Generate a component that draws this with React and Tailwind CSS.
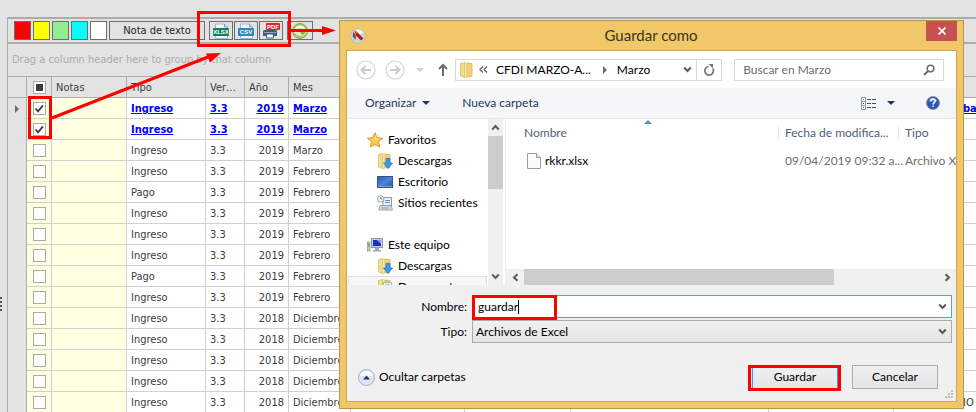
import React from 'react';
import clsx from 'clsx';

const columns = ['Notas', 'Tipo', 'Ver…', 'Año', 'Mes', '', '', '', '', ''];

const row = (tipo, anio, mes, extra = {}) => ({ tipo, version: '3.3', anio, mes, ...extra });

const rows = [
    row('Ingreso', 2019, 'Marzo', { checked: true, last: 'ba' }),
    row('Ingreso', 2019, 'Marzo', { checked: true }),
    row('Ingreso', 2019, 'Marzo'),
    row('Ingreso', 2019, 'Febrero'),
    row('Pago', 2019, 'Febrero'),
    row('Ingreso', 2019, 'Febrero'),
    row('Ingreso', 2019, 'Febrero'),
    row('Ingreso', 2019, 'Febrero'),
    row('Pago', 2019, 'Febrero'),
    row('Ingreso', 2019, 'Febrero'),
    row('Ingreso', 2018, 'Diciembre'),
    row('Ingreso', 2018, 'Diciembre'),
    row('Ingreso', 2018, 'Diciembre'),
    row('Ingreso', 2018, 'Diciembre'),
    row('Ingreso', 2018, 'Diciembre', { last: 'IO' }),
];

const swatches = [
    { name: 'Rojo', color: 'bg-[#ff0000]' },
    { name: 'Amarillo', color: 'bg-[#ffff00]' },
    { name: 'Verde', color: 'bg-[#90ee90]' },
    { name: 'Cian', color: 'bg-[#00ffff]' },
    { name: 'Blanco', color: 'bg-white' },
];

/* ---------- Icons ---------- */

function SheetIcon({ label, color }) {
    return (
        <svg width="18" height="16" viewBox="0 0 18 16">
            <path d="M3.500 1h9l3 3v11.500h-12z" fill="#f4f8fc" stroke="#9fb6d0" />
            <path d="M12.500 1v3h3" fill="#d5e1ee" stroke="#7f9cbd" />
            <rect x="1" y="5" width="16" height="8" rx="1" fill={color} />
            <text x="9" y="11" textAnchor="middle" fontSize="6" fontWeight="700" fontFamily="Liberation Sans, sans-serif" fill="#fff">
                {label}
            </text>
        </svg>
    );
}

function PdfPrintIcon() {
    return (
        <svg width="18" height="16" viewBox="0 0 18 16">
            <path d="M4.500 3.500h7V9h-7z" fill="#fff" stroke="#8ea3c2" />
            <path d="M2.500 7h11A1.500 1.500 0 0 1 15 8.500V13H1V8.500A1.500 1.500 0 0 1 2.500 7z" fill="#44597f" />
            <path d="M2 9.500h12" stroke="#8fa3c4" />
            <path d="M4.500 11h7v4h-7z" fill="#fff" stroke="#44597f" />
            <rect x="4" y="0" width="14" height="7" rx="1" fill="#d22c2c" />
            <text x="11" y="6" textAnchor="middle" fontSize="6" fontWeight="700" fontFamily="Liberation Sans, sans-serif" fill="#fff">
                PDF
            </text>
        </svg>
    );
}

function RefreshIcon() {
    return (
        <svg width="16" height="16" viewBox="0 0 16 16" fill="none">
            <circle cx="8" cy="8" r="7.500" fill="#a5c95a" stroke="#86ad3c" />
            <circle cx="8" cy="8" r="5" fill="#e3e3e3" />
            <path d="M3.500 10.500a5 5 0 1 1 9-4.500" stroke="#f4f9e8" strokeWidth="1.500" />
            <path d="M6.500 8h8.500l-4.200 5.500z" fill="#8cb63c" stroke="#f4f9e8" strokeWidth=".8" />
        </svg>
    );
}

function AppIcon() {
    return (
        <svg width="16" height="16" viewBox="0 0 16 16">
            <circle cx="8" cy="8" r="7.500" fill="#d3d3d0" stroke="#b7ab93" strokeWidth=".5" />
            <path d="M5 2c3-1.200 6.500-.5 8.500 2.500L9 7z" fill="#f5f5f5" />
            <path d="M4.500 2.500L7 4l6.500 6.500L11 12.500 6 7.500z" fill="#b01c1c" />
            <path d="M3.500 3.500L2.500 8l3 4L6 8z" fill="#5a5a5a" />
            <path d="M4.500 2.500L7 4.500 5.500 7z" fill="#e65a4a" />
        </svg>
    );
}

function NavArrow({ flip }) {
    return (
        <svg width="20" height="20" viewBox="0 0 20 20" fill="none" className={clsx(flip && 'rotate-180')}>
            <circle cx="10" cy="10" r="9" stroke="#d4d4d4" strokeWidth="1.200" />
            <path d="M15 10H6M9.500 6L5.500 10l4 4" stroke="#cbcbcb" strokeWidth="2" />
        </svg>
    );
}

function Chevron({ dir = 'down', className }) {
    const turn = { down: 'rotate-0', up: 'rotate-180', left: 'rotate-90', right: '-rotate-90' }[dir];
    return (
        <svg width="9" height="9" viewBox="0 0 9 9" fill="none" className={clsx(turn, className)}>
            <path d="M1.200 2.500L4.500 6l3.300-3.500" stroke="#5a5a5a" strokeWidth="2" />
        </svg>
    );
}

function Caret({ color = '#1e395b' }) {
    return (
        <svg width="8" height="4" viewBox="0 0 8 4">
            <path d="M0 0h8L4 4z" fill={color} />
        </svg>
    );
}

function FolderIcon({ children }) {
    return (
        <svg width="16" height="16" viewBox="0 0 16 16">
            <path d="M1.500 1.500l4-1v15l-4-1.500z" fill="#f3dc8c" stroke="#d9b95a" strokeWidth=".7" />
            <path d="M5.500 1h5v13.500l-5 1z" fill="#f9eab0" stroke="#dcc069" strokeWidth=".7" />
            <path d="M8 1.500h5v13H8z" fill="#efd37b" stroke="#d4b350" strokeWidth=".7" />
            {children}
        </svg>
    );
}

function DownloadsIcon() {
    return (
        <FolderIcon>
            <path d="M9 5.500h4V10h2.500L11 15.500 6.500 10H9z" fill="#3b9be6" stroke="#1f6fb8" strokeWidth=".7" />
        </FolderIcon>
    );
}

function DocumentsIcon() {
    return (
        <FolderIcon>
            <path d="M6.500 3.500h8v11h-8z" fill="#f4f8fc" stroke="#8ba3bd" strokeWidth=".8" />
            <path d="M8 6h5M8 8h5M8 10h5" stroke="#5d8fc4" />
        </FolderIcon>
    );
}

function StarIcon() {
    return (
        <svg width="16" height="16" viewBox="0 0 16 16">
            <path
                d="M8 .8l2.200 4.900 5.300.6-3.900 3.500 1.100 5.300L8 12.400l-4.700 2.700 1.100-5.300L.5 6.300l5.300-.6z"
                fill="#ffc94a"
                stroke="#e58a1f"
                strokeWidth=".9"
            />
            <path d="M8 3l1.300 3.500 3 .3L8 8z" fill="#ffe9a8" />
        </svg>
    );
}

function DesktopIcon() {
    return (
        <svg width="16" height="16" viewBox="0 0 16 16">
            <defs>
                <linearGradient id="desk" x1="0" y1="0" x2="1" y2="1">
                    <stop offset="0" stopColor="#2a5bb4" />
                    <stop offset=".5" stopColor="#4c86d6" />
                    <stop offset="1" stopColor="#2457ad" />
                </linearGradient>
            </defs>
            <rect x=".5" y="2.500" width="15" height="11" fill="url(#desk)" stroke="#3a5288" />
            <path d="M1 12.500h14" stroke="#7f9fd0" />
        </svg>
    );
}

function RecentIcon() {
    return (
        <svg width="16" height="16" viewBox="0 0 16 16">
            <path d="M6 2.500h8.500V11H6z" fill="#eef2f5" stroke="#8c979f" />
            <path d="M8 5.500h5M8 7.500h5" stroke="#5b94c4" />
            <path d="M3 10.500h11l1.500 4.500H2z" fill="#d0d6da" stroke="#8c979f" strokeWidth=".8" />
            <path d="M5 13h7" stroke="#8fa5b5" />
            <circle cx="3.700" cy="3.900" r="3.200" fill="#f7f9fa" stroke="#8c979f" strokeWidth=".9" />
            <path d="M3.700 2v2h1.600" fill="none" stroke="#55606a" strokeWidth=".8" />
        </svg>
    );
}

function ComputerIcon() {
    return (
        <svg width="16" height="16" viewBox="0 0 16 16">
            <rect x=".5" y="5" width="2.500" height="9" fill="#c4cace" stroke="#7e868c" strokeWidth=".6" />
            <path d="M1 6.500h1.500v3H1z" fill="#3fc23f" />
            <rect x="4.500" y="1.500" width="11" height="9" fill="#c9ced3" stroke="#9098a0" />
            <rect x="6" y="3" width="8" height="6" fill="#1b2fc4" />
            <path d="M9.500 3H14v4z" fill="#7f9af0" />
            <path d="M8 11h4v2H8zM6 13h8v1.500H6z" fill="#a4abb1" />
        </svg>
    );
}

function FileIcon() {
    return (
        <svg width="14" height="16" viewBox="0 0 14 16">
            <path d="M.5 .5h9l4 4v11H.5z" fill="#fafafa" stroke="#9c9c9c" />
            <path d="M9.500 .5v4h4" fill="#e6e6e6" stroke="#9c9c9c" />
        </svg>
    );
}

function ViewIcon() {
    return (
        <svg width="16" height="13" viewBox="0 0 16 13" shapeRendering="crispEdges">
            <path d="M.5 .5h4v12h-4zM.5 4.500h4M.5 8.500h4" fill="#fff" stroke="#8a9bb0" />
            <path d="M2 2h1v1H2z" fill="#3d8a3d" />
            <path d="M2 6h1v1H2z" fill="#c23030" />
            <path d="M2 10h1v1H2z" fill="#2f62b8" />
            <path d="M6 2.500h4m1 0h4M6 6.500h4m1 0h4M6 10.500h4m1 0h4" stroke="#3f4f6b" />
        </svg>
    );
}

function HelpIcon() {
    return (
        <svg width="14" height="14" viewBox="0 0 14 14">
            <circle cx="7" cy="7" r="6.500" fill="#2c55b8" stroke="#8d96a8" />
            <path d="M2.500 5.500a4.700 4.700 0 0 1 9 0z" fill="#6f95de" />
            <path d="M4.800 5.300c0-3 4.500-2.800 4.500-.3 0 1.600-2.200 1.600-2.200 3.400M7.100 9.600v1.500" fill="none" stroke="#fff" strokeWidth="1.500" />
        </svg>
    );
}

/* ---------- Grid ---------- */

function GridCheckbox({ checked, mixed, label }) {
    return (
        <span className="grid size-[13px] place-items-center">
            <input
                type="checkbox"
                aria-label={label}
                defaultChecked={checked}
                className="col-start-1 row-start-1 size-[13px] appearance-none border border-[#a9a9a9] bg-white"
            />
            {mixed && <span className="pointer-events-none col-start-1 row-start-1 size-[7px] bg-[#3c3c3c]" />}
            {checked && (
                <svg width="11" height="11" viewBox="0 0 11 11" fill="none" className="pointer-events-none col-start-1 row-start-1">
                    <path d="M1.500 5.500L4 8.300l5-6" stroke="#3c3c3c" strokeWidth="1.800" />
                </svg>
            )}
        </span>
    );
}

function GridRow({ item, index }) {
    const cell = 'h-[21px] overflow-hidden border-r border-b border-[#d0d0d0] bg-white px-1 pt-0.5 whitespace-nowrap';
    const value = (text) =>
        item.checked ? (
            <a href="#cfdi" className="font-bold text-[#0000ff] underline">
                {text}
            </a>
        ) : (
            text
        );

    return (
        <tr>
            <td className="h-[21px] border-r border-[#acacac] bg-[#e3e3e3]">
                {index === 0 && (
                    <svg width="5" height="8" viewBox="0 0 5 8" className="mx-auto">
                        <path d="M0 0l4 4-4 4z" fill="#6e6e6e" />
                    </svg>
                )}
            </td>
            <td className="h-[21px] border-r border-b border-[#d0d0d0] bg-[#ffffe1] pl-1.5">
                <GridCheckbox checked={item.checked} label={`Seleccionar fila ${index + 1}`} />
            </td>
            <td className="h-[21px] border-r border-b border-[#d0d0d0] bg-[#ffffe1]" />
            <td className={cell}>{value(item.tipo)}</td>
            <td className={cell}>{value(item.version)}</td>
            <td className={clsx(cell, 'text-right')}>{value(item.anio)}</td>
            <td className={cell}>{value(item.mes)}</td>
            <td className={cell} />
            <td className={cell} />
            <td className={cell} />
            <td className={cell} />
            <td className="h-[21px] border-b border-[#d0d0d0] bg-white pt-0.5 pl-[69px] whitespace-nowrap">
                {item.last && value(item.last)}
            </td>
        </tr>
    );
}

function InvoiceGrid() {
    return (
        <table className="w-full table-fixed border-separate border-spacing-0 text-left text-[#3c3c3c]">
            <colgroup>
                <col className="w-[19px]" />
                <col className="w-[25px]" />
                <col className="w-[75px]" />
                <col className="w-[79px]" />
                <col className="w-[39px]" />
                <col className="w-[44px]" />
                <col className="w-[62px]" />
                <col className="w-[114px]" />
                <col className="w-[106px]" />
                <col className="w-[198px]" />
                <col className="w-[125px]" />
                <col />
            </colgroup>
            <thead>
                <tr>
                    <th className="h-[22px] border-y border-r border-[#acacac]" />
                    <th className="border-y border-r border-[#acacac] pl-1.5">
                        <GridCheckbox mixed label="Seleccionar todo" />
                    </th>
                    {columns.map((name, i) => (
                        <th
                            key={i}
                            className={clsx(
                                'border-y border-[#acacac] px-1 pt-0.5 font-normal whitespace-nowrap',
                                i < columns.length - 1 && 'border-r',
                            )}
                        >
                            {name}
                        </th>
                    ))}
                </tr>
            </thead>
            <tbody>
                {rows.map((item, i) => (
                    <GridRow key={i} item={item} index={i} />
                ))}
            </tbody>
        </table>
    );
}

function GridToolbar() {
    const button = 'flex h-[19px] items-center justify-center border border-[#6e6e6e]';
    return (
        <div className="flex h-[25px] items-center border-b-2 border-[#acacac] pl-1.5">
            <div className="flex gap-0.5">
                {swatches.map((s) => (
                    <button key={s.name} aria-label={s.name} className={clsx('h-[19px] w-[17px] border border-[#6e6e6e]', s.color)} />
                ))}
                <button className={clsx(button, 'w-24 text-[#1e1e1e]')}>Nota de texto</button>
            </div>
            <div className="ml-1 flex gap-px">
                <button aria-label="Exportar a XLSX" className={clsx(button, 'w-6')}>
                    <SheetIcon label="XLSX" color="#12805c" />
                </button>
                <button aria-label="Exportar a CSV" className={clsx(button, 'w-6')}>
                    <SheetIcon label="CSV" color="#2f87bd" />
                </button>
                <button aria-label="Exportar a PDF" className={clsx(button, 'w-6')}>
                    <PdfPrintIcon />
                </button>
            </div>
            <button aria-label="Actualizar" className={clsx(button, 'ml-1 w-[26px]')}>
                <RefreshIcon />
            </button>
        </div>
    );
}

/* ---------- Dialog ---------- */

function TreeItem({ icon, label, root }) {
    return (
        <li className={clsx('flex h-[21px] items-center gap-[5px]', root ? 'pl-5' : 'pl-[30px]')}>
            {icon}
            {label}
        </li>
    );
}

function DialogNav() {
    return (
        <div className="flex h-[37px] items-center pr-3 pl-[9px]">
            <button aria-label="Atrás">
                <NavArrow />
            </button>
            <button aria-label="Adelante" className="ml-[9px]">
                <NavArrow flip />
            </button>
            <button aria-label="Recientes" className="ml-2.5 px-px">
                <Caret color="#cfcfcf" />
            </button>
            <button aria-label="Subir" className="ml-3">
                <svg width="12" height="13" viewBox="0 0 12 13" fill="none">
                    <path d="M6 13V2M2 6l4-4 4 4" stroke="#6b6b6b" strokeWidth="2" />
                </svg>
            </button>
            <div className="ml-1.5 flex h-[22px] flex-[276] items-center border border-[#d9d9d9] pl-[3px] whitespace-nowrap">
                <FolderIcon />
                <svg width="9" height="7" viewBox="0 0 9 7" fill="none" className="ml-1">
                    <path d="M4 .5l-3 3 3 3M8 .5l-3 3 3 3" stroke="#555" strokeWidth="1.200" />
                </svg>
                <span className="ml-2">CFDI MARZO-A...</span>
                <svg width="4" height="8" viewBox="0 0 4 8" className="ml-3">
                    <path d="M0 0l4 4-4 4z" fill="#6b6b6b" />
                </svg>
                <span className="ml-2.5">Marzo</span>
                <button aria-label="Ubicaciones anteriores" className="mr-1 ml-auto">
                    <Chevron />
                </button>
                <button aria-label="Actualizar carpeta" className="flex h-full w-[25px] items-center justify-center border-l border-[#d9d9d9]">
                    <svg width="12" height="12" viewBox="0 0 12 12" fill="none">
                        <path d="M9.800 4.500A4.300 4.300 0 1 1 5.500 2.500" stroke="#777" strokeWidth="1.700" />
                        <path d="M5.500 0h4.500v4.500z" fill="#777" />
                    </svg>
                </button>
            </div>
            <div className="ml-3 flex h-[22px] flex-[202] items-center border border-[#d9d9d9] pr-2 pl-2">
                <input
                    type="text"
                    aria-label="Buscar en Marzo"
                    placeholder="Buscar en Marzo"
                    className="w-full min-w-0 outline-none placeholder:text-[#6d6d6d]"
                />
                <svg width="12" height="12" viewBox="0 0 12 12" fill="none" className="shrink-0">
                    <circle cx="7.500" cy="4.500" r="3.300" stroke="#6b6b6b" strokeWidth="1.600" />
                    <path d="M5 7L1 11" stroke="#6b6b6b" strokeWidth="2" />
                </svg>
            </div>
        </div>
    );
}

function FileList() {
    return (
        <div className="flex min-w-0 flex-1 flex-col">
            <div className="flex h-[7px] items-start pt-px pl-[138px]">
                <svg width="8" height="4" viewBox="0 0 8 4">
                    <path d="M0 4h8L4 0z" fill="#4c93bd" />
                </svg>
            </div>
            <table className="w-full table-fixed border-separate border-spacing-0 text-left">
                <colgroup>
                    <col />
                    <col className="w-[120px]" />
                    <col className="w-[57px]" />
                </colgroup>
                <thead className="text-[#4c607a]">
                    <tr className="h-[14px] leading-[14px]">
                        <th className="border-r border-[#dfe9f5] pl-[18px] font-normal">Nombre</th>
                        <th className="border-r border-[#dfe9f5] pl-1.5 font-normal whitespace-nowrap">Fecha de modifica...</th>
                        <th className="pl-1.5 font-normal">Tipo</th>
                    </tr>
                </thead>
                <tbody className="text-[#6d6d6d]">
                    <tr>
                        <td className="h-[42px] pl-[21px] text-black">
                            <span className="flex items-center gap-1">
                                <FileIcon />
                                rkkr.xlsx
                            </span>
                        </td>
                        <td className="pl-1.5 whitespace-nowrap">09/04/2019 09:32 a...</td>
                        <td className="overflow-hidden pl-1.5 whitespace-nowrap">Archivo X</td>
                    </tr>
                </tbody>
            </table>
            <div className="mt-auto flex h-4 items-center bg-[#f0f0f0] pr-1 pl-[5px]">
                <Chevron dir="left" />
                <div className="ml-1 h-full w-[310px] bg-[#cdcdcd]" />
                <Chevron dir="right" className="ml-auto" />
            </div>
        </div>
    );
}

function SaveDialog() {
    return (
        <section
            role="dialog"
            aria-labelledby="dialog-title"
            className="absolute top-5 right-3 left-[339px] border border-[#b8954a] bg-[#f0c869] px-1.5 pb-1.5 font-[Lato,'Open_Sans',sans-serif] text-xs text-black"
        >
            <header className="flex h-[29px] items-start">
                <span className="self-center pl-1">
                    <AppIcon />
                </span>
                <h1 id="dialog-title" className="flex-1 self-center pl-2.5 text-center text-[15px] text-[#3a3420]">
                    Guardar como
                </h1>
                <button aria-label="Cerrar" className="flex h-5 w-[31px] items-center justify-center bg-[#c75050]">
                    <svg width="8" height="8" viewBox="0 0 8 8" fill="none">
                        <path d="M.5 .5l7 7M7.500 .5l-7 7" stroke="#fff" strokeWidth="1.700" />
                    </svg>
                </button>
            </header>

            <div className="border border-[#cfa54f] bg-white">
                <DialogNav />
                <div className="flex h-[31px] items-center border-b border-[#e5e8ec] bg-[#f4f6f8] pr-4 pl-[18px] text-[#1e395b]">
                    <button className="flex items-center gap-1.5">
                        Organizar
                        <Caret />
                    </button>
                    <button className="ml-8">Nueva carpeta</button>
                    <button aria-label="Vista" className="ml-auto flex items-center gap-2.5">
                        <ViewIcon />
                        <Caret />
                    </button>
                    <button aria-label="Ayuda" className="ml-[31px]">
                        <HelpIcon />
                    </button>
                </div>

                <div className="flex h-[166px] overflow-hidden">
                    <ul className="w-[141px] pt-2.5">
                        <TreeItem root icon={<StarIcon />} label="Favoritos" />
                        <TreeItem icon={<DownloadsIcon />} label="Descargas" />
                        <TreeItem icon={<DesktopIcon />} label="Escritorio" />
                        <TreeItem icon={<RecentIcon />} label="Sitios recientes" />
                        <li className="h-[21px]" />
                        <TreeItem root icon={<ComputerIcon />} label="Este equipo" />
                        <TreeItem icon={<DownloadsIcon />} label="Descargas" />
                        <li className="mx-px flex h-[21px] items-center gap-[5px] border border-[#dedede] bg-[#f7f7f7] pl-7">
                            <DocumentsIcon />
                            Documentos
                        </li>
                    </ul>
                    <div className="flex w-[15px] flex-col items-center bg-[#f0f0f0] py-1">
                        <Chevron dir="up" />
                        <div className="mt-1 h-[53px] w-full bg-[#cdcdcd]" />
                        <Chevron className="mt-auto" />
                    </div>
                    <div className="ml-px w-[2px] border-r border-[#f0f0f0]" />
                    <FileList />
                </div>

                <div className="bg-[#f0f0f0] pt-2.5 pr-1 pb-3">
                    <div className="flex items-center">
                        <label htmlFor="file-name" className="w-[125px] pr-[5px] text-right">
                            Nombre:
                        </label>
                        <div className="flex h-[23px] flex-1 items-center border border-[#569de5] bg-white pr-1">
                            <input id="file-name" type="text" defaultValue="guardar" className="field-sizing-content pl-[5px] outline-none" />
                            <span className="h-[14px] w-px bg-black" />
                            <Chevron className="ml-auto" />
                        </div>
                    </div>
                    <div className="mt-0.5 flex items-center">
                        <label htmlFor="file-type" className="w-[125px] pr-[5px] text-right">
                            Tipo:
                        </label>
                        <div className="grid h-[23px] flex-1 items-center border border-[#acacac] bg-linear-to-b from-[#f0f0f0] to-[#e5e5e5]">
                            <select id="file-type" className="col-start-1 row-start-1 appearance-none pl-[3px] outline-none">
                                <option>Archivos de Excel</option>
                            </select>
                            <Chevron className="pointer-events-none col-start-1 row-start-1 mr-1 justify-self-end" />
                        </div>
                    </div>

                    <div className="mt-[22px] flex items-center pr-3.5 pl-[11px]">
                        <button className="flex items-center gap-1">
                            <svg width="17" height="17" viewBox="0 0 17 17">
                                <circle cx="8.500" cy="8.500" r="8" fill="#dfe6f0" stroke="#a3b0c8" />
                                <path d="M2 7a6.700 6.700 0 0 1 13 0z" fill="#f8fafc" />
                                <path d="M5 10.500h7L8.500 6.500z" fill="#1e3a78" />
                            </svg>
                            Ocultar carpetas
                        </button>
                        <button className="ml-auto h-6 w-[86px] border border-[#3399ff] bg-linear-to-b from-[#f0f0f0] to-[#e5e5e5]">
                            Guardar
                        </button>
                        <button className="ml-3.5 h-6 w-[86px] border border-[#acacac] bg-linear-to-b from-[#f0f0f0] to-[#e5e5e5]">
                            Cancelar
                        </button>
                    </div>
                </div>
            </div>

            {/* Resize grip */}
            <svg width="8" height="8" viewBox="0 0 8 8" className="absolute right-2.5 bottom-2.5" fill="#bfbfbf">
                <path d="M6 0h2v2H6zM3 3h2v2H3zM6 3h2v2H6zM0 6h2v2H0zM3 6h2v2H3zM6 6h2v2H6z" />
            </svg>
        </section>
    );
}

/* Red boxes and arrows that walk through the export steps */
function Annotations() {
    return (
        <svg width="976" height="412" viewBox="0 0 976 412" className="pointer-events-none absolute top-0 left-0" fill="none" stroke="#ff0000" strokeWidth="3">
            <rect x="29.500" y="97.500" width="21" height="40" />
            <rect x="198.500" y="12.500" width="91" height="33" />
            <rect x="473.500" y="296.500" width="82" height="22" />
            <rect x="749.500" y="366.500" width="90" height="23" />
            <path d="M52 118L208 57M291 30.500h32" />
            <path d="M221 53l-11 9.500-4-9zM336 30.500l-14 4.500v-9z" fill="#ff0000" stroke="none" />
        </svg>
    );
}

export default function App() {
    return (
        <main className="relative h-screen overflow-hidden bg-[#e3e3e3] pt-[17px] font-['DejaVu_Sans_Condensed','DejaVu_Sans',sans-serif] text-[11px] leading-4">
            <div className="flex">
                <aside className="flex w-[7px] shrink-0 flex-col gap-0.5 pt-[280px]">
                    <div className="h-0.5 w-0.5 bg-[#555]" />
                    <div className="h-0.5 w-0.5 bg-[#555]" />
                    <div className="h-0.5 w-0.5 bg-[#555]" />
                    <div className="h-0.5 w-0.5 bg-[#555]" />
                </aside>
                <div className="min-w-0 flex-1 border-t-2 border-l border-[#acacac]">
                    <GridToolbar />
                    <p className="flex h-8 items-center pl-1 text-[#acacac]">Drag a column header here to group by that column</p>
                    <InvoiceGrid />
                </div>
            </div>
            <SaveDialog />
            <Annotations />
        </main>
    );
}
